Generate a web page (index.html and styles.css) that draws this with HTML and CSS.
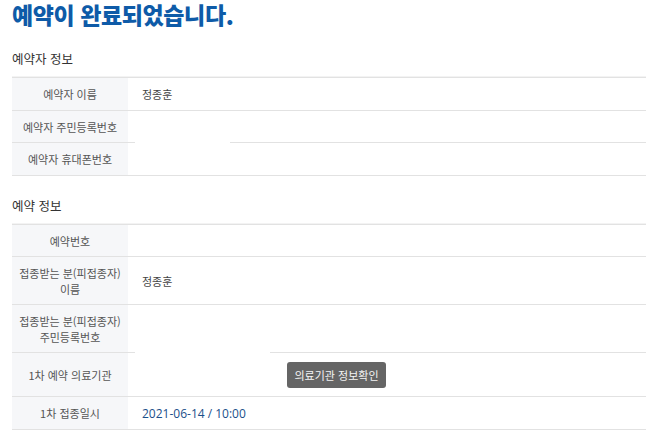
FILE: index.html
```html
<!DOCTYPE html>
<html lang="ko">
<head>
<meta charset="utf-8">
<link rel="stylesheet" href="styles.css">
</head>
<body>
<div class="page">
  <h1 class="title">예약이 완료되었습니다.</h1>

  <h2 class="section">예약자 정보</h2>
  <table class="info">
    <tr class="h33"><th>예약자 이름</th><td>정종훈</td></tr>
    <tr class="h32"><th>예약자 주민등록번호</th><td><span class="mask m1"></span></td></tr>
    <tr class="h33"><th>예약자 휴대폰번호</th><td></td></tr>
  </table>

  <h2 class="section s2">예약 정보</h2>
  <table class="info">
    <tr class="h32"><th>예약번호</th><td></td></tr>
    <tr class="h48"><th>접종받는 분(피접종자)<br>이름</th><td>정종훈</td></tr>
    <tr class="h48"><th>접종받는 분(피접종자)<br>주민등록번호</th><td><span class="mask m2"></span></td></tr>
    <tr class="h43"><th>1차 예약 의료기관</th><td><button class="btn">의료기관 정보확인</button></td></tr>
    <tr class="h33"><th>1차 접종일시</th><td class="date">2021-06-14 / 10:00</td></tr>
  </table>
</div>
</body>
</html>
```
FILE: styles.css
```css
* { box-sizing: border-box; }
html, body { margin: 0; padding: 0; background: #fff; }
body {
  font-family: "Noto Sans CJK KR", "Noto Sans", sans-serif;
  color: #333;
}
.page { padding: 0 12px; width: 658px; }
.title {
  margin: 0;
  height: 32px;
  line-height: 28px;
  font-size: 23px;
  font-weight: 900;
  letter-spacing: -0.4px;
  color: #0e5ba8;
}
.section {
  margin: 0;
  font-size: 12.5px;
  font-weight: 400;
  color: #333;
  line-height: 18px;
  padding-top: 18px;
  height: 45px;
}
.section.s2 { padding-top: 21px; height: 48px; }
.info {
  width: 634px;
  border-collapse: collapse;
  border-top: 1px solid #e2e2e2;
  box-shadow: 0 -1px 0 #f3f3f3;
}
.info th, .info td {
  border-bottom: 1px solid #e2e2e2;
  padding: 0;
  font-size: 11px;
  font-weight: 400;
  vertical-align: middle;
}
.info th {
  width: 116px;
  background: #f6f7f9;
  color: #555;
  text-align: center;
  line-height: 16px;
}
.info td {
  position: relative;
  padding-left: 14px;
  color: #444;
}
.h32 th, .h32 td { height: 32px; }
.h33 th, .h33 td { height: 33px; }
.h48 th, .h48 td { height: 48px; }
.h43 th, .h43 td { height: 44px; }
.mask {
  position: absolute;
  bottom: -1px;
  left: 7px;
  height: 2px;
  background: #fff;
}
.m1 { width: 95px; }
.m2 { width: 135px; }
.btn {
  margin-left: 145px;
  width: 99px;
  height: 26px;
  border: 0;
  border-radius: 3px;
  background: #656565;
  color: #f4f4f4;
  font-family: "Noto Sans CJK KR", sans-serif;
  font-size: 11px;
  padding: 0;
}
.date { color: #1b4f8a !important; font-family: "Open Sans", "Noto Sans", sans-serif; font-size: 12px !important; }
```
